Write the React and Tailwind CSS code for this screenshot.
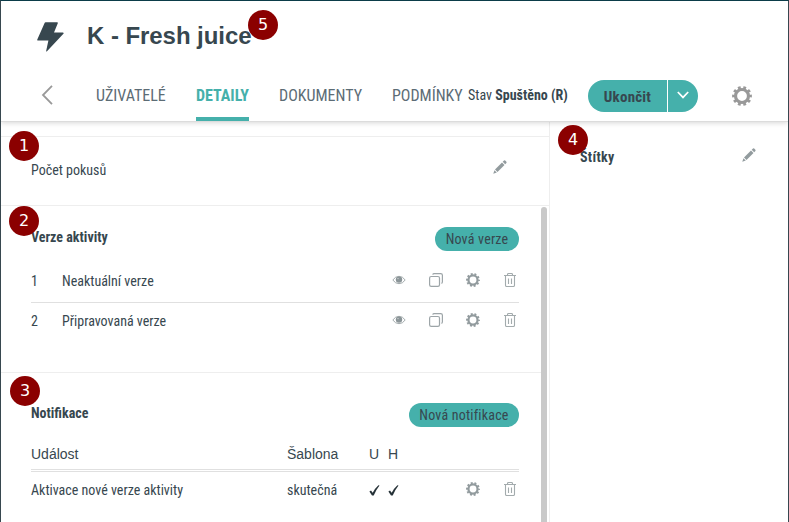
import React from "react";

const cond = "font-['Roboto_Condensed',Roboto,sans-serif] [font-stretch:75%] whitespace-nowrap";
const arial = "font-['Liberation_Sans',Arial,sans-serif] whitespace-nowrap";

function Gear({ className }) {
  return (
    <svg viewBox="0 0 20 20" className={className} fill="none" stroke="currentColor">
      <circle cx="10" cy="10" r="6.5" strokeWidth="3.2" />
      <circle cx="10" cy="10" r="8.5" strokeWidth="2.8" pathLength="100" strokeDasharray="5.2 4.8" strokeDashoffset="2.6" />
    </svg>
  );
}

function Pencil() {
  return (
    <svg viewBox="0 0 14 14" className="block h-[14px] w-[14px] shrink-0 text-[#929b9e]" fill="currentColor">
      <path d="M0.3 13.7 1.4 10.2 3.8 12.6Z" />
      <path d="M2 9.5 9 2.5 11.5 5 4.5 12Z" />
      <path d="M9.7 1.8 11 .6Q11.6.1 12.2.6L13.4 1.8Q13.9 2.4 13.4 3L12.2 4.3Z" />
    </svg>
  );
}

function Eye() {
  return (
    <svg viewBox="0 0 14 10" className="block h-[10px] w-[14px]" fill="none" stroke="#a3abad">
      <path d="M.8 5Q3.4 1.3 7 1.3T13.2 5Q10.6 8.7 7 8.7T.8 5Z" strokeWidth="1" />
      <circle cx="7" cy="4.6" r="3.2" fill="#8b9598" stroke="none" />
      <circle cx="6" cy="3.6" r=".7" fill="#d4d8d9" stroke="none" />
    </svg>
  );
}

function Copy() {
  return (
    <svg viewBox="0 0 14 14" className="block h-[14px] w-[14px]" fill="none" stroke="#9da5a8" strokeWidth="1.2">
      <rect x=".6" y="3.5" width="9.9" height="9.9" rx="1.6" />
      <path d="M3.7 1.6Q4 .6 5.2.6H11.7Q13.4.6 13.4 2.3V8.8Q13.4 10.2 12.4 10.4" />
    </svg>
  );
}

function Trash() {
  return (
    <svg viewBox="0 0 12 14" className="block h-[14px] w-[12px]" fill="none" stroke="#a3abad" strokeWidth="1.1">
      <path d="M0 2.5H12M3.5 2.5V1.5Q3.5.5 4.5.5H7.5Q8.5.5 8.5 1.5V2.5M1.5 3V12.3Q1.5 13.5 2.7 13.5H9.3Q10.5 13.5 10.5 12.3V3M4.5 5.5V11M7.5 5.5V11" />
    </svg>
  );
}

function Check() {
  return (
    <svg viewBox="0 0 11 11" className="block h-[11px] w-[11px]" fill="#263238">
      <path d="M.4 6.4 2 5.4 3.7 7.8Q6 3.2 9.4.2L10.5.5Q7.2 4.6 4.7 10.6H3Z" />
    </svg>
  );
}

function Badge({ n, className }) {
  return (
    <div className={"absolute z-10 flex h-[30px] w-[30px] items-center justify-center rounded-full bg-[#8b0000] font-['DejaVu_Sans',sans-serif] text-[16px] leading-none text-white " + className}>
      {n}
    </div>
  );
}

function Pill({ children, className }) {
  return (
    <button className={"flex h-6 items-center justify-center rounded-full bg-[#45b0ab] text-[14px] tracking-[0.2px] text-[#37474f] " + cond + " " + className}>
      {children}
    </button>
  );
}

function VersionRow({ n, name, textClass, className }) {
  return (
    <div className={"flex items-center " + className}>
      <div className={"flex flex-1 text-[14px] " + cond + " " + textClass}>
        <span className="w-[31px]">{n}</span>
        <span>{name}</span>
      </div>
      <div className="flex items-center pr-[3px] pb-[2px]">
        <Eye />
        <div className="ml-[23px]"><Copy /></div>
        <Gear className="ml-[23px] block h-[14px] w-[14px] text-[#929b9e]" />
        <div className="ml-[24px]"><Trash /></div>
      </div>
    </div>
  );
}

function Tab({ children, className }) {
  return (
    <div className={"flex h-full items-center border-b-4 pt-[4px] text-[16px] leading-5 " + cond + " " + className}>{children}</div>
  );
}

export default function App() {
  return (
    <div className="relative flex h-[522px] w-[789px] flex-col overflow-hidden border-x border-t border-x-[#37474f] border-t-[#0b3c49] bg-white text-[#37474f]">
      <header className="relative h-[121px] shrink-0 border-b border-[#dcdcdc] bg-white shadow-[0_1px_5px_rgba(0,0,0,0.16)]">
        <div className="flex h-[70px] items-center pl-[36px]">
          <svg viewBox="0 0 27 30" className="mt-[2px] block h-[30px] w-[27px]" fill="#37474f">
            <path d="M8.6.3H20.2Q21.2.3 20.8 1.2L17 10.6H25.8Q27.4 10.6 26.4 11.8L10 29.2Q9 30 9.2 28.8L11.4 18.6H1.2Q-.1 18.6.3 17.4L7.6 1Q7.9.3 8.6.3Z" />
          </svg>
          <h1 className={"ml-[23px] text-[24px] leading-7 font-bold tracking-[-0.06px] " + arial}>K - Fresh juice</h1>
        </div>
        <div className="flex h-[50px] items-center">
          <svg viewBox="0 0 12 20" className="-mt-[3px] ml-[40px] block h-5 w-3 shrink-0" fill="none" stroke="#999" strokeWidth="1.8">
            <path d="M11 .8 2 10 11 19.2" />
          </svg>
          <nav className="ml-[43px] flex h-full gap-[30px] text-[#5c6c75]">
            <Tab className="w-[70px] border-transparent">UŽIVATELÉ</Tab>
            <Tab className="w-[53px] border-[#45b0ab] font-bold text-[#45b0ab]">DETAILY</Tab>
            <Tab className="w-[83px] border-transparent">DOKUMENTY</Tab>
            <Tab className="w-[71px] border-transparent">PODMÍNKY</Tab>
          </nav>
          <div className={"ml-[5px] w-[120px] shrink-0 pb-[2px] text-[14px] " + cond}>
            Stav <b>Spuštěno (R)</b>
          </div>
          <div className="flex h-8 w-[110px] shrink-0 overflow-hidden rounded-full bg-[#45b0ab]">
            <button className={"w-[80px] border-r border-white pt-[2px] text-[15px] font-bold tracking-[0.2px] " + cond}>Ukončit</button>
            <button className="flex flex-1 items-center justify-center pb-[2px]">
              <svg viewBox="0 0 12 8" className="block h-2 w-3" fill="none" stroke="white" strokeWidth="1.7"><path d="M.8 1 6 6.4 11.2 1" /></svg>
            </button>
          </div>
          <Gear className="ml-[34px] block h-5 w-5 shrink-0 text-[#999]" />
        </div>
      </header>

      <div className="flex min-h-0 flex-1">
        <main className="flex w-[549px] shrink-0 flex-col border-r border-[#eee]">
          <section className="mt-[14px] flex h-[70px] shrink-0 items-center justify-between border-y border-[#eee] pr-[42px] pl-[30px]">
            <span className={"pb-[2px] text-[14px] " + cond}>Počet pokusů</span>
            <div className="pb-[8px]"><Pencil /></div>
          </section>
          <div className="flex min-h-0 flex-1">
            <div className="w-[540px] shrink-0">
              <section className="h-[167px] border-b border-[#eee] pt-[21px] pr-[22px] pl-[30px]">
                <div className="flex justify-between">
                  <h2 className={"text-[14px] leading-5 font-bold " + cond}>Verze aktivity</h2>
                  <Pill className="w-[84px]">Nová verze</Pill>
                </div>
                <VersionRow n="1" name="Neaktuální verze" textClass="pt-[2px]" className="mt-[8px] h-[44px] border-b border-[#e0e0e0]" />
                <VersionRow n="2" name="Připravovaná verze" textClass="" className="h-[36px]" />
              </section>
              <section className="pt-[30px] pr-[22px] pl-[30px]">
                <div className="flex justify-between">
                  <h2 className={"text-[14px] leading-5 font-bold " + cond}>Notifikace</h2>
                  <Pill className="w-[110px]">Nová notifikace</Pill>
                </div>
                <div className={"mt-[12px] flex h-[31px] items-center border-b border-[#e0e0e0] pt-px text-[14px] " + arial}>
                  <span className="w-[256px]">Událost</span>
                  <span className="w-[82px]">Šablona</span>
                  <span className="w-[19px]">U</span>
                  <span>H</span>
                </div>
                <div className={"mt-px flex h-[37px] items-center border-t border-[#e0e0e0] text-[14px] " + cond}>
                  <span className="w-[256px]">Aktivace nové verze aktivity</span>
                  <span className="w-[82px]">skutečná</span>
                  <div className="w-[19px]"><Check /></div>
                  <Check />
                  <div className="ml-[67px] flex items-center gap-[24px] pb-[2px]">
                    <Gear className="block h-[14px] w-[14px] text-[#929b9e]" />
                    <Trash />
                  </div>
                </div>
              </section>
            </div>
            <div className="mt-px w-[6px] shrink-0 rounded-t-[3px] bg-[#c9c9c9]" />
          </div>
        </main>
        <aside className="flex h-[70px] flex-1 items-center justify-between pr-[32px] pl-[30px]">
          <h2 className={"text-[14px] font-bold tracking-[0.3px] " + cond}>Štítky</h2>
          <div className="pb-[4px]"><Pencil /></div>
        </aside>
      </div>

      <Badge n="5" className="top-[9px] left-[247px]" />
      <Badge n="1" className="top-[130px] left-[8px]" />
      <Badge n="2" className="top-[205px] left-[8px]" />
      <Badge n="3" className="top-[375px] left-[9px]" />
      <Badge n="4" className="top-[124px] left-[557px]" />
    </div>
  );
}
